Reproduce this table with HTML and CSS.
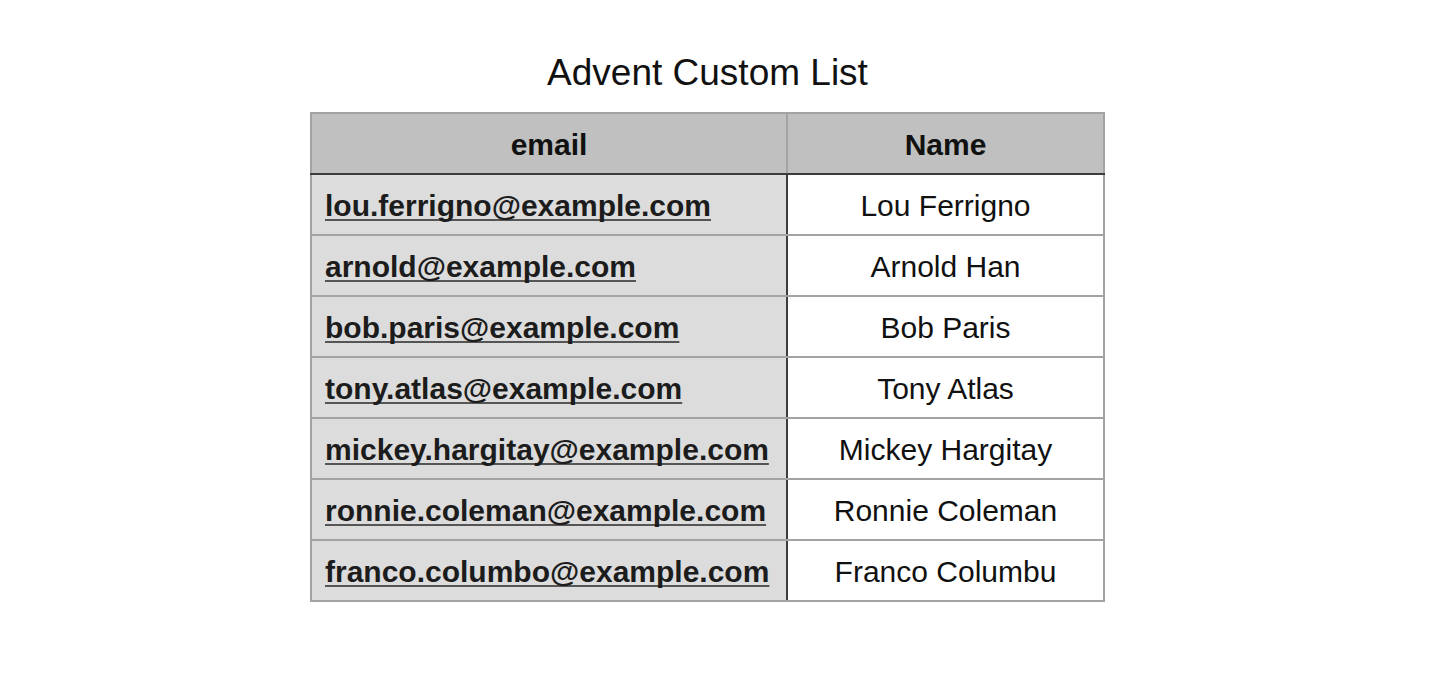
FILE: index.html
```html
<!DOCTYPE html>
<html>
<head>
<meta charset="utf-8">
<link rel="stylesheet" href="styles.css">
</head>
<body>
<main class="page">
  <h1 class="title">Advent Custom List</h1>
  <table class="list">
    <thead>
      <tr><th class="col-email">email</th><th class="col-name">Name</th></tr>
    </thead>
    <tbody>
      <tr><td class="email"><a href="#">lou.ferrigno@example.com</a></td><td class="name">Lou Ferrigno</td></tr>
      <tr><td class="email"><a href="#">arnold@example.com</a></td><td class="name">Arnold Han</td></tr>
      <tr><td class="email"><a href="#">bob.paris@example.com</a></td><td class="name">Bob Paris</td></tr>
      <tr><td class="email"><a href="#">tony.atlas@example.com</a></td><td class="name">Tony Atlas</td></tr>
      <tr><td class="email"><a href="#">mickey.hargitay@example.com</a></td><td class="name">Mickey Hargitay</td></tr>
      <tr><td class="email"><a href="#">ronnie.coleman@example.com</a></td><td class="name">Ronnie Coleman</td></tr>
      <tr><td class="email"><a href="#">franco.columbo@example.com</a></td><td class="name">Franco Columbu</td></tr>
    </tbody>
  </table>
</main>
</body>
</html>
```

FILE: styles.css
```css
html, body {
  margin: 0;
  padding: 0;
  background: #ffffff;
}
body {
  font-family: "Liberation Sans", Arial, Helvetica, sans-serif;
  color: #000;
}
.page {
  display: flex;
  flex-direction: column;
  align-items: center;
  padding-right: 25px;
  padding-top: 51px;
}
.title {
  margin: 0 0 17px 0;
  font-size: 37px;
  font-weight: normal;
  line-height: 44px;
  color: #111;
}
.list {
  border-collapse: collapse;
  border: 2px solid #a3a3a3;
  width: 795px;
}
.list th {
  background: #bfc0bf;
  font-size: 30px;
  font-weight: bold;
  height: 57px;
  padding: 2px 0 0 0;
  text-align: center;
  color: #111;
  border: 2px solid #a3a3a3;
  border-bottom: 2px solid #3c3c3c;
}
.col-email { width: 474px; }
.list td {
  font-size: 30px;
  height: 56px;
  padding: 3px 0 0 0;
  border: 2px solid #a3a3a3;
}
.list td.email {
  background: #dcdcdc;
  text-align: left;
  padding-left: 13px;
  border-right: 2px solid #3c3c3c;
  font-weight: bold;
}
.list td.email a {
  color: #1c1c1c;
  text-decoration: underline;
  text-decoration-color: #555555;
  text-decoration-thickness: 2px;
  text-decoration-skip-ink: none;
  text-underline-offset: 3px;
}
.list td.name {
  background: #ffffff;
  text-align: center;
  color: #111;
}
```
